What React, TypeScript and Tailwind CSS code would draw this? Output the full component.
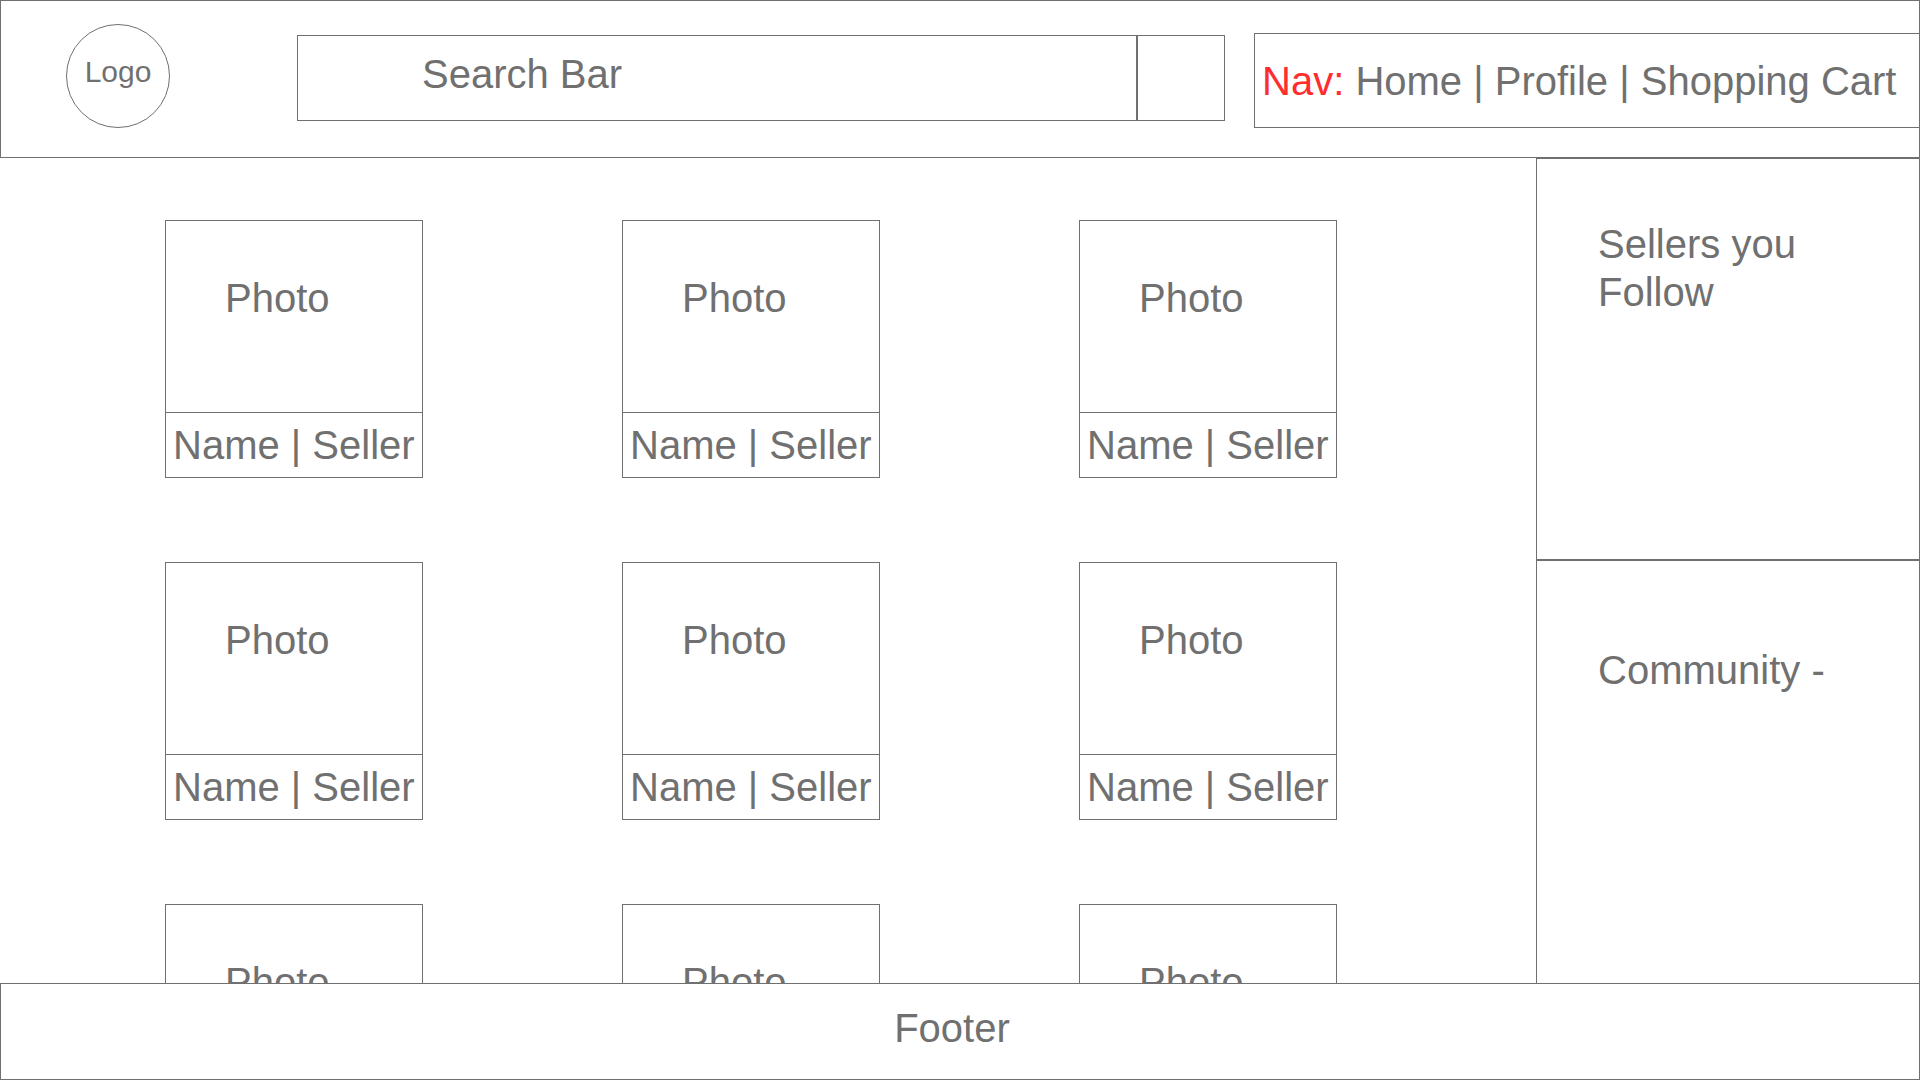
import React from "react";

const products = Array.from({ length: 9 }, (_, i) => ({ id: i + 1, photo: "Photo", name: "Name", seller: "Seller" }));

function Header() {
  return (
    <header className="flex h-[158px] shrink-0 items-start border border-[#707070]">
      <a
        href="#"
        className="mt-[23px] ml-[65px] flex size-[104px] shrink-0 justify-center rounded-full border border-[#707070] pt-[29px] text-[30px] leading-9"
      >
        Logo
      </a>
      <form role="search" className="mt-[34px] ml-[127px] flex h-[86px] min-w-0 flex-1">
        <input
          type="text"
          aria-label="Search"
          placeholder="Search Bar"
          className="min-w-0 flex-1 border border-[#707070] bg-white pb-2 pl-[124px] outline-none placeholder:text-[#707070] placeholder:opacity-100"
        />
        <button type="button" aria-label="Submit search" className="w-[88px] shrink-0 border border-[#707070]" />
      </form>
      <nav className="mt-8 ml-[29px] w-[665px] shrink-0 border-y border-l border-[#707070] pt-[23px] pb-[22px] pl-[7px] whitespace-nowrap">
        <span className="text-[#ff2d2d]">Nav:</span> <a href="#home">Home</a> | <a href="#profile">Profile</a> |{" "}
        <a href="#cart">Shopping Cart</a>
      </nav>
    </header>
  );
}

function ProductCard({ photo, name, seller }: { photo: string; name: string; seller: string }) {
  return (
    <article className="w-[258px] border border-[#707070]">
      <div className="h-[191px] pt-[53px] pl-[59px]">{photo}</div>
      <div className="border-t border-[#707070] py-2 pl-[7px] whitespace-nowrap">
        {name} | {seller}
      </div>
    </article>
  );
}

export default function App() {
  return (
    <div className="flex h-screen flex-col overflow-hidden bg-white font-['Helvetica_Neue','Liberation_Sans',Arial,sans-serif] text-[40px] leading-[48px] text-[#707070]">
      <Header />
      <div className="flex min-h-0 flex-1">
        <main className="grid flex-1 grid-cols-[repeat(3,258px)] content-start justify-between gap-y-[84px] overflow-hidden pt-[62px] pr-[199px] pl-[165px]">
          {products.map((p) => (
            <ProductCard key={p.id} photo={p.photo} name={p.name} seller={p.seller} />
          ))}
        </main>
        <aside className="flex w-1/5 shrink-0 flex-col">
          <section className="h-[402px] shrink-0 border border-[#707070] pt-[61px] pr-20 pl-[61px]">
            <h2>Sellers you Follow</h2>
          </section>
          <section className="flex-1 border-x border-t border-[#707070] pt-[85px] pl-[61px]">
            <h2>Community -</h2>
          </section>
        </aside>
      </div>
      <footer className="flex h-[97px] shrink-0 justify-center border border-[#707070] pt-5 pr-4">Footer</footer>
    </div>
  );
}
